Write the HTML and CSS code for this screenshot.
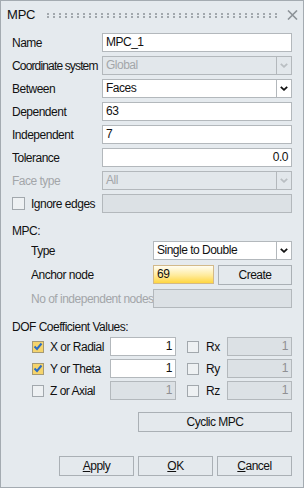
FILE: index.html
```html
<!DOCTYPE html>
<html lang="en">
  <head>
    <meta charset="UTF-8" />
    <title>MPC</title>
    <link rel="stylesheet" href="styles.css">
  </head>
  <body>
    <div class="dialog">
      <div class="titlebar">
        <span class="title">MPC</span>
        <span class="grip"></span>
        <svg class="close" width="11" height="10" viewBox="0 0 11 10">
          <path d="M1 0.5 L10 9.5 M10 0.5 L1 9.5" stroke="#8c9297" stroke-width="1.6" fill="none" />
        </svg>
      </div>

      <div class="content">
        <div class="row">
          <span class="label">Name</span>
          <div class="field">MPC_1</div>
        </div>
        <div class="row">
          <span class="label tight">Coordinate system</span>
          <div class="select disabled">
            <span class="sel-text">Global</span>
            <span class="sel-btn"><svg width="8" height="5" viewBox="0 0 8 5"><path d="M0.8 0.8 L4 3.8 L7.2 0.8" stroke="#b9bec2" stroke-width="1.8" fill="none"/></svg></span>
          </div>
        </div>
        <div class="row">
          <span class="label">Between</span>
          <div class="select">
            <span class="sel-text">Faces</span>
            <span class="sel-btn"><svg width="8" height="5" viewBox="0 0 8 5"><path d="M0.8 0.8 L4 3.8 L7.2 0.8" stroke="#111" stroke-width="1.8" fill="none"/></svg></span>
          </div>
        </div>
        <div class="row">
          <span class="label">Dependent</span>
          <div class="field">63</div>
        </div>
        <div class="row">
          <span class="label">Independent</span>
          <div class="field">7</div>
        </div>
        <div class="row">
          <span class="label">Tolerance</span>
          <div class="field num">0.0</div>
        </div>
        <div class="row">
          <span class="label muted">Face type</span>
          <div class="select disabled">
            <span class="sel-text">All</span>
            <span class="sel-btn"><svg width="8" height="5" viewBox="0 0 8 5"><path d="M0.8 0.8 L4 3.8 L7.2 0.8" stroke="#b9bec2" stroke-width="1.8" fill="none"/></svg></span>
          </div>
        </div>
        <div class="row">
          <span class="label check-label"><span class="box"></span>Ignore edges</span>
          <div class="field off"></div>
        </div>

        <div class="section">MPC:</div>
        <div class="row sub">
          <span class="label">Type</span>
          <div class="select">
            <span class="sel-text">Single to Double</span>
            <span class="sel-btn"><svg width="8" height="5" viewBox="0 0 8 5"><path d="M0.8 0.8 L4 3.8 L7.2 0.8" stroke="#111" stroke-width="1.8" fill="none"/></svg></span>
          </div>
        </div>
        <div class="row sub">
          <span class="label">Anchor node</span>
          <div class="field anchor">69</div>
          <div class="btn create">Create</div>
        </div>
        <div class="row sub">
          <span class="label muted">No of independent nodes</span>
          <div class="field off"></div>
        </div>

        <div class="section">DOF Coefficient Values:</div>
        <div class="dof-row">
          <span class="box checked"><svg width="10" height="9" viewBox="0 0 10 9"><path d="M1.5 4.5 L4 7 L8.5 1.5" stroke="#2b6cc4" stroke-width="2" fill="none"/></svg></span>
          <span class="dof-label">X or Radial</span>
          <div class="field num dof-field">1</div>
          <span class="box"></span>
          <span class="rot-label">Rx</span>
          <div class="field num off grow">1</div>
        </div>
        <div class="dof-row">
          <span class="box checked"><svg width="10" height="9" viewBox="0 0 10 9"><path d="M1.5 4.5 L4 7 L8.5 1.5" stroke="#2b6cc4" stroke-width="2" fill="none"/></svg></span>
          <span class="dof-label">Y or Theta</span>
          <div class="field num dof-field">1</div>
          <span class="box"></span>
          <span class="rot-label">Ry</span>
          <div class="field num off grow">1</div>
        </div>
        <div class="dof-row">
          <span class="box"></span>
          <span class="dof-label">Z or Axial</span>
          <div class="field num off dof-field">1</div>
          <span class="box"></span>
          <span class="rot-label">Rz</span>
          <div class="field num off grow">1</div>
        </div>

        <div class="cyclic-row">
          <div class="btn cyclic">Cyclic MPC</div>
        </div>

        <div class="actions">
          <div class="btn"><u>A</u>pply</div>
          <div class="btn"><u>O</u>K</div>
          <div class="btn"><u>C</u>ancel</div>
        </div>
      </div>
    </div>
  </body>
</html>
```

FILE: styles.css
```css
body {
  margin: 0;
  font-family: "Liberation Sans", Arial, sans-serif;
  font-size: 12px;
  color: #111;
}

.dialog {
  width: 304px;
  height: 488px;
  box-sizing: border-box;
  border: 1px solid #a4abb1;
  background: #e5eaee;
  letter-spacing: -0.5px;
}

.titlebar {
  height: 26px;
  display: flex;
  align-items: center;
  padding: 0 5px 0 6px;
}

.title {
  font-size: 13px;
  letter-spacing: -0.2px;
  width: 40px;
}

.grip {
  flex: 1;
  height: 5px;
  margin-right: 10px;
  margin-top: 2px;
  background-image: linear-gradient(90deg, #a2a8ad 2px, transparent 0),
    linear-gradient(90deg, #a2a8ad 2px, transparent 0);
  background-size: 6px 2px, 6px 2px;
  background-position: 0 0, 0 3px;
  background-repeat: repeat-x;
}

.close {
  display: block;
  margin-top: 1px;
}

.content {
  display: flex;
  flex-direction: column;
  padding: 6px 11px 0 11px;
}

.row {
  display: flex;
  align-items: center;
  height: 19px;
  margin-bottom: 4px;
}

.label {
  width: 90px;
  flex: none;
  white-space: nowrap;
  overflow: hidden;
}

.label.tight {
  letter-spacing: -0.85px;
}

.muted {
  color: #a3a6a9;
}

.field {
  flex: 1;
  height: 19px;
  box-sizing: border-box;
  border: 1px solid #b3b8bc;
  background: #fff;
  padding: 0 3px;
  line-height: 17px;
  white-space: nowrap;
}

.field.num {
  text-align: right;
}

.field.off {
  background: #dce1e5;
  color: #8f8f93;
}

.select {
  flex: 1;
  height: 19px;
  box-sizing: border-box;
  border: 1px solid #b3b8bc;
  background: #fff;
  display: flex;
}

.sel-text {
  flex: 1;
  padding: 0 3px;
  line-height: 17px;
}

.sel-btn {
  width: 14px;
  border-left: 1px solid #b3b8bc;
  display: flex;
  align-items: center;
  justify-content: center;
}

.select.disabled {
  background: #e2e7eb;
  color: #a3a6a9;
}

.check-label {
  display: flex;
  align-items: center;
}

.box {
  width: 12px;
  height: 12px;
  box-sizing: border-box;
  border: 1px solid #a2a8ad;
  background: #eef1f3;
  flex: none;
  display: inline-flex;
  align-items: center;
  justify-content: center;
}

.check-label .box {
  width: 13px;
  height: 13px;
  margin-right: 6px;
}

.box.checked {
  background: #f5d46c;
  border-color: #a59a76;
}

.section {
  height: 14px;
  line-height: 14px;
  margin-top: 7px;
  margin-bottom: 3px;
}

.row.sub {
  padding-left: 19px;
  margin-bottom: 5px;
}

.row.sub .label {
  width: 122px;
}

.anchor {
  flex: none;
  width: 61px;
  height: 19px;
  border-color: #d2b98a;
  background: linear-gradient(#fffdf2, #ffeb9c 55%, #ffd640);
}

.btn {
  box-sizing: border-box;
  border: 1px solid #aab0b5;
  background: #e4e9ed;
  text-align: center;
  height: 20px;
  line-height: 18px;
}

.create {
  flex: 1;
  margin-left: 4px;
}

.dof-row {
  display: flex;
  align-items: center;
  height: 19px;
  margin-bottom: 3px;
  padding-left: 20px;
}

.dof-label {
  width: 60px;
  margin-left: 6px;
  white-space: nowrap;
}

.dof-field {
  flex: none;
  width: 66px;
  margin-right: 11px;
}

.rot-label {
  width: 21px;
  margin-left: 7px;
}

.grow {
  flex: 1;
}

.cyclic-row {
  display: flex;
  justify-content: flex-end;
  margin-top: 9px;
}

.cyclic {
  width: 154px;
}

.actions {
  display: flex;
  justify-content: flex-end;
  gap: 4px;
  margin-top: 24px;
}

.actions .btn {
  width: 75px;
}
```
